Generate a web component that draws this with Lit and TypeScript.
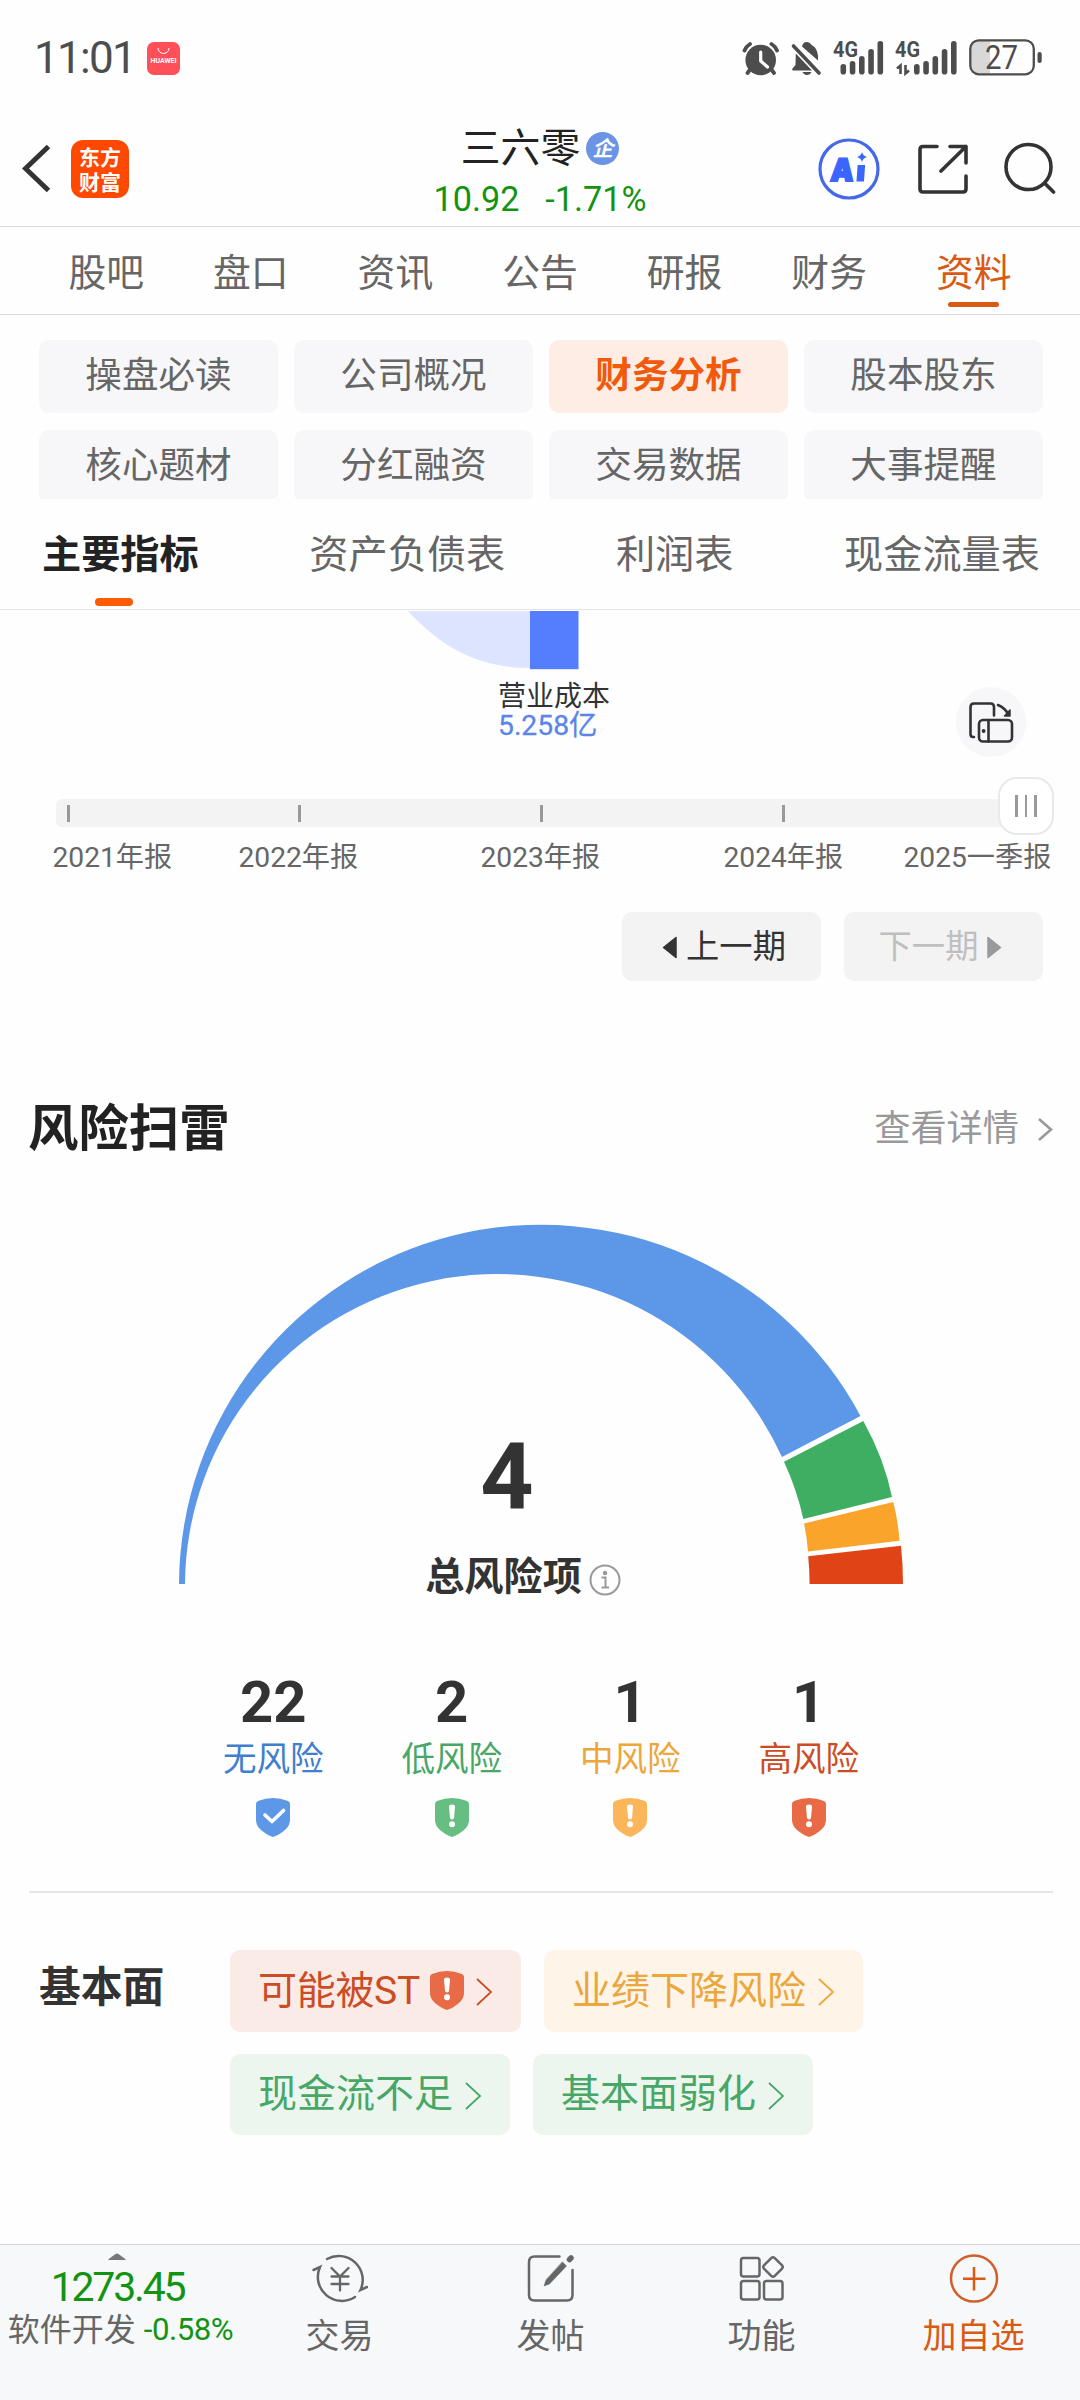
import { LitElement, html, css, svg } from "lit";
import { customElement, property } from "lit/decorators.js";
import { classMap } from "lit/directives/class-map.js";

type Tone = "none" | "low" | "mid" | "high";

const TABS = ["股吧", "盘口", "资讯", "公告", "研报", "财务", "资料"];
const CHIPS = ["操盘必读", "公司概况", "财务分析", "股本股东", "核心题材", "分红融资", "交易数据", "大事提醒"];
const SHEETS = ["主要指标", "资产负债表", "利润表", "现金流量表"];
const PERIODS = ["2021年报", "2022年报", "2023年报", "2024年报", "2025一季报"];
const LEVELS: { count: number; label: string; tone: Tone }[] = [
  { count: 22, label: "无风险", tone: "none" },
  { count: 2, label: "低风险", tone: "low" },
  { count: 1, label: "中风险", tone: "mid" },
  { count: 1, label: "高风险", tone: "high" },
];
const TAGS: { label: string; tone: Tone; shield?: boolean }[] = [
  { label: "可能被ST", tone: "high", shield: true },
  { label: "业绩下降风险", tone: "mid" },
  { label: "现金流不足", tone: "low" },
  { label: "基本面弱化", tone: "low" },
];

@customElement("risk-shield")
class RiskShield extends LitElement {
  @property() tone: Tone = "none";

  static styles = css`
    :host { display: block; width: 34px; height: 39px; }
    svg { display: block; }
    .none { fill: #5d98e8; }
    .low { fill: #66be82; }
    .mid { fill: #fbb65a; }
    .high { fill: #e96a47; }
    .mark { fill: #fff; }
    .check { fill: none; stroke: #fff; stroke-width: 3.6; stroke-linecap: round; stroke-linejoin: round; }
  `;

  render() {
    return html`<svg width="34" height="39" viewBox="0 0 34 39">
      <path class=${this.tone} d="M2 3Q17 -3 32 3Q34 4 34 6V22Q34 27 30 31Q25 36 17 39Q9 36 4 31Q0 27 0 22V6Q0 4 2 3Z" />
      ${this.tone === "none"
        ? svg`<path class="check" d="M9 17L16 23.5L27.5 12.5" />`
        : svg`<path class="mark" d="M14 9Q14 6.6 17 6.6Q20 6.6 20 9L19 20Q18.8 21.4 17 21.4Q15.200 21.400 15 20Z" /><circle class="mark" cx="17" cy="26.300" r="3" />`}
    </svg>`;
  }
}

@customElement("status-bar")
class StatusBar extends LitElement {
  static styles = css`
    :host { display: flex; justify-content: space-between; height: 116px; padding: 29px 36px 0 34px; box-sizing: border-box; color: #4d4d4d; }
    .left { display: flex; height: 58px; align-items: center; }
    .time { font-size: 44px; line-height: 38px; letter-spacing: -1.7px; width: 113px; white-space: nowrap; }
    svg { display: block; }
    text { font-family: Roboto, sans-serif; }
    .store { fill: #fff; font-size: 7px; font-weight: 700; }
    .net { fill: #4d4d4d; font-size: 22px; font-weight: 700; }
    .level { fill: #4d4d4d; font-size: 33px; }
  `;

  render() {
    const tops = [64, 61, 56, 49, 41];
    const bars = (x: number) =>
      tops.map((t, i) => svg`<rect x=${x + i * 9.25} y=${t} width="5.600" height=${74.500 - t} rx="2.800" />`);
    return html`
      <div class="left">
        <span class="time">11:01</span>
        <svg width="33" height="33" viewBox="0 0 33 33">
          <rect width="33" height="33" rx="7" fill="#ff4f58" />
          <path d="M11 6a5.500 5.500 0 0 0 11 0" fill="none" stroke="#fff" stroke-width="1" />
          <text class="store" x="3.500" y="21.400" textLength="26" lengthAdjust="spacingAndGlyphs">HUAWEI</text>
        </svg>
      </div>
      <svg width="303" height="58" viewBox="741 29 303 58" fill="#4d4d4d">
        <circle cx="760.700" cy="60" r="15.300" />
        <path d="M744.500 50.500Q746 46.500 750 44M777 50.500Q775.500 46.500 771.500 44M750.500 69L747.500 73M771 69L774 73" fill="none" stroke="#4d4d4d" stroke-width="3.800" stroke-linecap="round" />
        <path d="M760.700 52V61L767.500 67" fill="none" stroke="#fff" stroke-width="3.200" stroke-linecap="round" stroke-linejoin="round" />
        <path d="M802 46.500Q803 42 806.500 42Q810 42 811 44.500Q817.500 48 818 56V60.500ZM795.800 53.500L812 70.500H793Q791.500 70.500 792.500 68.500L795.500 65ZM802.500 72H811.500Q810 75 807 75Q804 75 802.500 72Z" />
        <path d="M793.500 46L819 73" stroke="#4d4d4d" stroke-width="3.600" stroke-linecap="round" />
        <text class="net" x="833" y="57" textLength="25" lengthAdjust="spacingAndGlyphs">4G</text>
        ${bars(840.5)}
        <text class="net" x="895" y="57" textLength="25" lengthAdjust="spacingAndGlyphs">4G</text>
        ${bars(914)}
        <path d="M897 68.500L900.500 65.500V74M905.500 65V73.500L909 70.500" fill="none" stroke="#4d4d4d" stroke-width="2.600" />
        <path d="M979 40.500H990V74H979Q970.500 74 970.500 66V48.500Q970.500 40.500 979 40.500Z" fill="#d8d8d8" />
        <rect x="970.300" y="40.300" width="63.500" height="34" rx="8.500" fill="none" stroke="#4d4d4d" stroke-width="2.300" />
        <rect x="1037.500" y="52" width="4.200" height="11" rx="2" />
        <text class="level" x="985" y="69" textLength="33" lengthAdjust="spacingAndGlyphs">27</text>
      </svg>
    `;
  }
}

@customElement("stock-header")
class StockHeader extends LitElement {
  static styles = css`
    :host { display: grid; grid-template-columns: 1fr 240px 1fr; height: 111px; box-sizing: border-box; border-bottom: 1px solid #d9d9d9; color: #222; }
    svg { display: block; }
    .nav { display: flex; align-items: flex-start; gap: 20px; padding: 24px 0 0 22px; }
    .logo { width: 58px; height: 58px; border-radius: 12px; background: #ff4800; color: #fff; font-size: 21px; font-weight: 700; line-height: 24.500px; text-align: center; padding-top: 6px; box-sizing: border-box; }
    .title { padding-top: 8px; display: flex; flex-direction: column; align-items: center; }
    .name { display: flex; align-items: center; gap: 6px; height: 48px; font-size: 39.800px; line-height: 49px; white-space: nowrap; }
    .badge { width: 33px; height: 33px; border-radius: 50%; background: #6b93e6; color: #fff; font-size: 21px; font-weight: 700; font-style: italic; line-height: 34px; text-align: center; }
    .quote { display: flex; gap: 26px; color: #129412; font-size: 34.200px; line-height: 54px; height: 52px; white-space: nowrap; }
    .actions { display: flex; justify-content: flex-end; align-items: flex-start; padding: 22px 24px 0 0; gap: 35px; }
    .ai { fill: #3a66ff; font: 900 31px Inter, sans-serif; }
  `;

  render() {
    return html`
      <div class="nav">
        <svg width="29" height="58" viewBox="22 141 29 58"><path d="M48.500 147.500L25.500 169.500L48.500 191.500" fill="none" stroke="#333" stroke-width="5" /></svg>
        <div class="logo">东方<br />财富</div>
      </div>
      <div class="title">
        <div class="name"><span>三六零</span><span class="badge">企</span></div>
        <div class="quote"><span>10.92</span><span>-1.71%</span></div>
      </div>
      <div class="actions">
        <svg width="62" height="62" viewBox="0 0 62 62">
          <circle cx="31" cy="31" r="29" fill="none" stroke="#4468e8" stroke-width="3.200" />
          <g transform="translate(11 43) skewX(-4)">
            <text class="ai" x="1" y="0" stroke="#3a66ff" stroke-width="2" textLength="23" lengthAdjust="spacingAndGlyphs">A</text>
            <path d="M27.500 -16H35V0.500H27.500Z" fill="#3a66ff" />
          </g>
          <path d="M44 14Q45 18 49 19Q45 20 44 24Q43 20 39 19Q43 18 44 14Z" fill="#3a66ff" />
        </svg>
        <svg width="53" height="62" viewBox="914 138 53 62" fill="none" stroke="#333" stroke-width="3.600" stroke-linecap="round" stroke-linejoin="round">
          <path d="M936 146.500H922Q919 146.500 919 149.500V189Q919 192 922 192H962Q965 192 965 189V176M949 146.500H965V163M965 146.500L940 171" />
        </svg>
        <svg width="53" height="62" viewBox="1003 138 53 62" fill="none" stroke="#333" stroke-width="3.600" stroke-linecap="round">
          <circle cx="1028.500" cy="167" r="22.500" /><path d="M1044.500 183L1053.500 192" />
        </svg>
      </div>
    `;
  }
}

@customElement("page-tabs")
class PageTabs extends LitElement {
  static styles = css`
    :host { display: block; color: #666; }
    .tabs { display: grid; grid-template-columns: repeat(7, 1fr); height: 88px; box-sizing: border-box; padding: 0 34px; border-bottom: 1px solid #d9d9d9; font-size: 37.800px; }
    .tab { display: flex; flex-direction: column; align-items: center; line-height: 75px; padding-top: 9px; height: 75px; }
    .on { color: #d85a14; }
    .on::after { content: ""; width: 51px; height: 5px; border-radius: 3px; background: #d85a14; margin-top: -9px; flex: none; }
    .chips { display: grid; grid-template-columns: repeat(4, 239px); grid-auto-rows: 73px; gap: 17px 16px; padding: 25px 39px 0; height: 184px; box-sizing: border-box; overflow: hidden; }
    .chip { border-radius: 10px; background: #f7f7fa; text-align: center; font-size: 36.600px; line-height: 71px; }
    .sel { background: #feede5; color: #f05a0c; font-weight: 700; }
    .sheets { display: flex; justify-content: space-between; height: 111px; box-sizing: border-box; padding: 0 40px 0 42px; border-bottom: 1px solid #e4e4e6; font-size: 39.200px; line-height: 112px; }
    .sheet { display: flex; flex-direction: column; align-items: center; height: 107px; white-space: nowrap; }
    .main { color: #222; font-weight: 700; }
    .main::after { content: ""; width: 38px; height: 8px; border-radius: 4px; background: #ff5a05; margin-top: -13px; margin-right: 13px; flex: none; }
  `;

  render() {
    return html`
      <div class="tabs">${TABS.map((t) => html`<div class=${classMap({ tab: true, on: t === "资料" })}>${t}</div>`)}</div>
      <div class="chips">${CHIPS.map((t) => html`<div class=${classMap({ chip: true, sel: t === "财务分析" })}>${t}</div>`)}</div>
      <div class="sheets">${SHEETS.map((t, i) => html`<div class=${classMap({ sheet: true, main: i === 0 })}>${t}</div>`)}</div>
    `;
  }
}

@customElement("period-chart")
class PeriodChart extends LitElement {
  static styles = css`
    :host { display: block; }
    svg { display: block; }
    .flow { display: grid; grid-template-columns: 408px 172px 376px 70px; height: 189px; }
    .cost { grid-column: 2; white-space: nowrap; }
    .label { margin: 11px 0 0 90px; font-size: 28px; line-height: 32px; color: #333; }
    .value { margin: -2px 0 0 90px; font-size: 28.300px; line-height: 29px; color: #5b85e8; -webkit-text-stroke: 0.300px #5b85e8; }
    .rotate { grid-column: 4; width: 70px; height: 70px; border-radius: 50%; background: #f7f7fa; margin-top: 77px; }
    .track { position: relative; display: grid; grid-template-columns: 231px 242px 242px 1fr; align-items: center; height: 28px; margin: 0 40px 0 56px; padding-left: 10.500px; border-radius: 6px; background: #f3f3f3; }
    .tick { width: 3px; height: 17px; background: #999; }
    .thumb { position: absolute; right: -14px; top: -22px; width: 56px; height: 58px; box-sizing: border-box; border: 2px solid #e9e9e9; border-radius: 19px; background: #fff; display: flex; justify-content: center; align-items: center; gap: 7px; }
    .grip { width: 2.500px; height: 22px; background: #999; }
    .periods { display: grid; grid-template-columns: 186px 242px 243px 180px 1fr; padding-left: 52.500px; margin-top: 10px; height: 40px; line-height: 41px; font-size: 28.200px; color: #666; white-space: nowrap; }
    .buttons { display: flex; justify-content: flex-end; gap: 23px; padding: 35px 37px 0 0; height: 104px; box-sizing: border-box; }
    .btn { display: flex; justify-content: center; align-items: center; gap: 9px; width: 199px; height: 69px; border-radius: 10px; background: #f3f3f3; color: #333; font-size: 33.300px; line-height: 67px; box-sizing: border-box; padding-left: 5px; }
    .off { color: #bfbfbf; padding: 0 6px 0 0; }
    .btn svg { margin-top: 2px; }
  `;

  render() {
    return html`
      <div class="flow">
        <div class="cost">
          <svg width="172" height="60" viewBox="408 610 172 60">
            <path d="M408 611.300H530V668Q472 668 430 632Q417 621 408 611.300Z" fill="#dde4ff" />
            <rect x="530" y="611" width="48.500" height="58.200" fill="#557eff" />
          </svg>
          <div class="label">营业成本</div>
          <div class="value">5.258亿</div>
        </div>
        <div class="rotate">
          <svg width="70" height="70" viewBox="956 687 70 70" fill="none" stroke="#333" stroke-width="2.600" stroke-linecap="round" stroke-linejoin="round">
            <path d="M974 737H973Q970.500 737 970.500 734V707Q970.500 703.500 974 703.500H990.500Q994 703.500 994 707V715.500" />
            <rect x="979" y="720" width="33" height="21.500" rx="4" />
            <path d="M988.500 720V741.500M998 705Q1005 708 1008.500 714.500" />
            <path d="M1010 710V716H1004.500Z" fill="#333" stroke-width="1.500" />
            <circle cx="983.600" cy="731" r="1.200" fill="#333" stroke-width="1.500" />
          </svg>
        </div>
      </div>
      <div class="track">
        ${[0, 1, 2, 3].map(() => html`<span class="tick"></span>`)}
        <div class="thumb"><span class="grip"></span><span class="grip"></span><span class="grip"></span></div>
      </div>
      <div class="periods">${PERIODS.map((p) => html`<span>${p}</span>`)}</div>
      <div class="buttons">
        <div class="btn"><svg width="15" height="23" viewBox="0 0 15 23"><path d="M14 1.500V21.500L1.500 11.500Z" fill="#333" stroke="#333" stroke-width="1.500" stroke-linejoin="round" /></svg>上一期</div>
        <div class="btn off">下一期<svg width="15" height="23" viewBox="0 0 15 23"><path d="M1 1.500V21.500L13.500 11.500Z" fill="#999" stroke="#999" stroke-width="1.500" stroke-linejoin="round" /></svg></div>
      </div>
    `;
  }
}

@customElement("risk-scan")
class RiskScan extends LitElement {
  static styles = css`
    :host { display: block; }
    svg { display: block; }
    .head { display: flex; justify-content: space-between; align-items: center; height: 80px; margin-top: 108px; padding: 0 26px 0 28px; }
    .title { font-size: 50.400px; font-weight: 700; color: #222; line-height: 80px; }
    .more { display: flex; align-items: center; gap: 17px; font-size: 36.200px; line-height: 80px; color: #999; }
    .gauge { display: grid; justify-items: center; margin-top: 53px; height: 370px; }
    .arc, .sum { grid-area: 1 / 1; }
    .arc { margin-left: 1.500px; }
    .sum { display: flex; flex-direction: column; align-items: center; color: #333; padding-top: 202.500px; }
    .total { font: 700 93px/104px Roboto, sans-serif; margin-right: 66px; }
    .caption { display: flex; align-items: center; gap: 7px; font-size: 39.200px; font-weight: 700; line-height: 60px; margin: 18px 34px 0 0; }
    .caption svg { margin-top: 7px; }
    .levels { display: grid; grid-template-columns: repeat(4, 1fr); padding: 0 182px 0 184px; margin-top: 76px; height: 223px; }
    .level { display: flex; flex-direction: column; align-items: center; }
    .count { font: 700 58px/68px Roboto, sans-serif; color: #333; }
    .name { font-size: 33.600px; line-height: 46px; margin: 1px 0 15px; }
    .rule { height: 2px; margin: 0 27px 0 29px; background: #e6e6e6; }
    .basics { display: flex; padding: 57px 0 0 39px; height: 352px; box-sizing: border-box; }
    .group { width: 191px; font-size: 41.800px; font-weight: 700; color: #333; line-height: 76px; }
    .tags { display: flex; flex-wrap: wrap; align-content: flex-start; gap: 22px 23px; width: 720px; }
    .tag { display: flex; align-items: center; height: 81.500px; border-radius: 10px; padding: 0 28px; font-size: 39px; line-height: 80px; white-space: nowrap; box-sizing: border-box; }
    .tag svg { margin: 3px 0 0 11px; }
    .tag risk-shield { margin-left: 10px; }
    .tag.high { letter-spacing: -0.300px; }
    .text-none { color: #3f7fce; }
    .text-low, .tag.low { color: #48a767; }
    .text-mid, .tag.mid { color: #eba63c; }
    .text-high, .tag.high { color: #cb4d25; }
    .tag.low { background: #ecf6ef; }
    .tag.mid { background: #fef5e8; }
    .tag.high { background: #fbebe7; }
  `;

  render() {
    return html`
      <div class="head">
        <span class="title">风险扫雷</span>
        <span class="more">查看详情<svg width="18" height="26" viewBox="0 0 18 26"><path d="M3 3L15 13.500L3 24" fill="none" stroke="#999" stroke-width="2.600" /></svg></span>
      </div>
      <div class="gauge">
        <svg class="arc" width="728" height="364" viewBox="177 1222 728 364">
          <path fill="#5d98e8" d="M179 1584A362 361 0 0 1 860.500 1416L782 1457A312.500 312 0 0 0 185 1584Z" />
          <path fill="#3eae63" d="M863.300 1421Q884 1458 892 1497L803.300 1519Q797 1490 784 1461.800Z" />
          <path fill="#faa42b" d="M893.300 1502Q898 1521 899.600 1540.700L808 1551.400Q807 1537 804 1523.600Z" />
          <path fill="#e04316" d="M901 1545.700Q903 1565 903 1584H809.600Q809.600 1570 808.200 1556.200Z" />
        </svg>
        <div class="sum">
          <span class="total">4</span>
          <span class="caption">总风险项<svg width="32" height="32" viewBox="0 0 32 32" fill="none" stroke="#999" stroke-width="2"><circle cx="16" cy="16" r="14.500" /><path d="M12.500 13.500H16.500V23.500M12.500 23.500H20" /><circle cx="16" cy="9" r="1.200" fill="#999" /></svg></span>
        </div>
      </div>
      <div class="levels">
        ${LEVELS.map((l) => html`<div class="level">
          <span class="count">${l.count}</span>
          <span class="name text-${l.tone}">${l.label}</span>
          <risk-shield .tone=${l.tone}></risk-shield>
        </div>`)}
      </div>
      <div class="rule"></div>
      <div class="basics">
        <div class="group">基本面</div>
        <div class="tags">
          ${TAGS.map((t) => html`<div class="tag ${t.tone}">
            ${t.label}${t.shield ? html`<risk-shield .tone=${t.tone}></risk-shield>` : null}<svg width="18" height="30" viewBox="0 0 18 30"><path d="M2 2L16 15L2 28" fill="none" stroke="currentColor" stroke-width="1.800" /></svg>
          </div>`)}
        </div>
      </div>
    `;
  }
}

@customElement("bottom-bar")
class BottomBar extends LitElement {
  static styles = css`
    :host { display: grid; grid-template-columns: 234px 211px 211px 211px 213px; height: 156px; box-sizing: border-box; border-top: 1px solid #d3d3dc; background: #f7f8fa; color: #666; }
    svg { display: block; }
    .index { display: flex; flex-direction: column; align-items: center; padding-top: 8px; }
    .points { font-size: 41px; line-height: 44px; letter-spacing: -2.200px; color: #129412; margin-top: 5px; padding-left: 1px; }
    .sector { display: flex; align-items: center; gap: 8px; font-size: 32px; line-height: 40px; white-space: nowrap; padding-left: 7px; margin-top: 1px; }
    .pct { font-size: 31.200px; letter-spacing: -0.500px; color: #129412; }
    .item { display: flex; flex-direction: column; align-items: center; padding-top: 6px; font-size: 34px; line-height: 50px; }
    .item svg { margin-bottom: 6px; }
    .add { color: #d85a14; }
  `;

  render() {
    return html`
      <div class="index">
        <svg width="18" height="7" viewBox="0 0 18 7"><path d="M0 7Q1.500 5 8 0.800Q9 0.200 10 0.800Q16.500 5 18 7Z" fill="#77777c" /></svg>
        <span class="points">1273.45</span>
        <span class="sector">软件开发<span class="pct">-0.58%</span></span>
      </div>
      <div class="item">
        <svg width="56" height="54" viewBox="312 2251 56 54" fill="none" stroke="#666" stroke-width="2.500" stroke-linecap="round">
          <path d="M327 2259A24 24 0 0 1 360.500 2290L367 2287M355 2297A24 24 0 0 1 320 2267L313.500 2270" />
          <path d="M331.500 2268L340 2276.500L348.500 2268M340 2276.500V2290.500M331.500 2276.500H348.500M331.500 2284H348.500" stroke-width="2.300" />
        </svg>交易
      </div>
      <div class="item">
        <svg width="50" height="54" viewBox="526.500 2251 50 54" fill="none" stroke="#666" stroke-width="2.500" stroke-linecap="round">
          <path d="M560 2256.500H535Q529.500 2256.500 529.500 2262V2295Q529.500 2300.500 535 2300.500H567.500Q573 2300.500 573 2295V2270" />
          <path d="M563 2262L567 2266L550 2284L544.500 2286L546.500 2280Z" fill="#666" stroke-width="0.500" />
          <path d="M570 2259.500L571.500 2258" stroke-width="5.500" />
        </svg>发帖
      </div>
      <div class="item">
        <svg width="48" height="54" viewBox="739 2251 48 54" fill="none" stroke="#666" stroke-width="2.500">
          <rect x="742" y="2258" width="18.500" height="18.500" rx="2.500" />
          <rect x="742" y="2281" width="18.500" height="18.500" rx="2.500" />
          <rect x="765" y="2281" width="18.500" height="18.500" rx="2.500" />
          <rect x="766.500" y="2259.500" width="15" height="15" rx="2.500" transform="rotate(45 774 2267)" />
        </svg>功能
      </div>
      <div class="item add">
        <svg width="50" height="54" viewBox="0 0 50 54" fill="none" stroke="#d0602a" stroke-width="2.500">
          <circle cx="25" cy="27.500" r="23" /><path d="M25 16V39.500M14 27.800H36.500" stroke="#d85a14" />
        </svg>加自选
      </div>
    `;
  }
}

@customElement("app-root")
class AppRoot extends LitElement {
  static styles = css`
    :host { display: flex; flex-direction: column; width: 1080px; height: 2400px; overflow: hidden; background: #fefefe; font-family: Roboto, "Noto Sans CJK SC", sans-serif; }
    .scroll { flex: 1; min-height: 0; overflow: hidden; }
  `;

  render() {
    return html`
      <status-bar></status-bar>
      <stock-header></stock-header>
      <page-tabs></page-tabs>
      <div class="scroll">
        <period-chart></period-chart>
        <risk-scan></risk-scan>
      </div>
      <bottom-bar></bottom-bar>
    `;
  }
}
